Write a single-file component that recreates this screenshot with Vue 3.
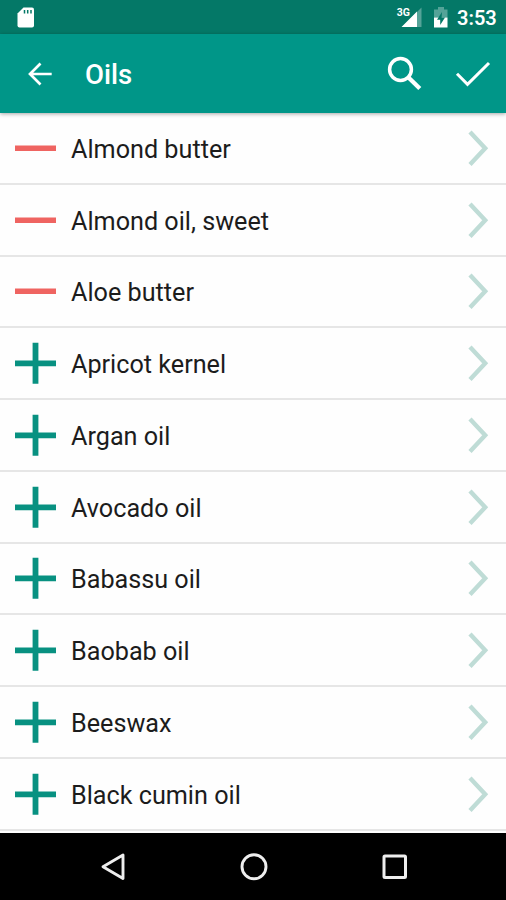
<script setup>
const oils = [
  { name: 'Almond butter', added: true },
  { name: 'Almond oil, sweet', added: true },
  { name: 'Aloe butter', added: true },
  { name: 'Apricot kernel', added: false },
  { name: 'Argan oil', added: false },
  { name: 'Avocado oil', added: false },
  { name: 'Babassu oil', added: false },
  { name: 'Baobab oil', added: false },
  { name: 'Beeswax', added: false },
  { name: 'Black cumin oil', added: false },
]
</script>

<template>
  <div class="screen">
    <div class="status">
      <svg class="sd" width="18" height="22" viewBox="0 0 18 22">
        <path d="M6.500 .5H15a2 2 0 0 1 2 2v16a2 2 0 0 1-2 2H2.500a2 2 0 0 1-2-2V6.500z" fill="#fff" />
        <path d="M7.500 3v3.500M10.700 3v3.500M14 3v3.500" stroke="#047867" stroke-width="1.500" />
      </svg>
      <div class="network">
        <span class="gen">3G</span>
        <svg width="21" height="20" viewBox="0 0 21 20">
          <path d="M20.500 .5V20H1z" fill="#fff" fill-opacity=".32" />
          <path d="M16 4.500V20H.5z" fill="#fff" />
        </svg>
      </div>
      <svg class="battery" width="16" height="21" viewBox="0 0 16 21">
        <path d="M5 0h6v2.500h3.500V10.500H1V2.500h4z" fill="#fff" fill-opacity=".32" />
        <path d="M1 10.500h13.500v10H1z" fill="#fff" />
        <path d="M9 5 4 12.800h3.200v5.200l4.800-7.500H8.600z" fill="#047867" />
      </svg>
      <span class="clock">3:53</span>
    </div>

    <header class="bar">
      <svg class="back" width="26" height="26" viewBox="0 0 26 26">
        <path d="M13.500 2.500 3 13l10.500 10.500M3 13h21.700" fill="none" stroke="#fff" stroke-width="2.700" />
      </svg>
      <h1 class="title">Oils</h1>
      <svg class="search" width="36" height="36" viewBox="0 0 36 36">
        <circle cx="13.500" cy="13.500" r="10.900" fill="none" stroke="#fff" stroke-width="3.500" />
        <path d="m21.500 21.500 11.300 11" stroke="#fff" stroke-width="4.300" />
      </svg>
      <svg class="check" width="36" height="28" viewBox="0 0 36 28">
        <path d="m2 13.800 10.500 10.500L34 3" fill="none" stroke="#fff" stroke-width="3" />
      </svg>
    </header>

    <ul class="list">
      <li v-for="oil in oils" :key="oil.name" class="row">
        <svg class="toggle" width="42" height="42" viewBox="0 0 42 42">
          <path v-if="oil.added" d="M0 21.300h41" stroke="#ef6461" stroke-width="5.600" />
          <path v-else d="M0 21.300h41M20.500 .8v41" stroke="#089181" stroke-width="5.800" />
        </svg>
        <span class="name">{{ oil.name }}</span>
        <svg class="chevron" width="22" height="38" viewBox="0 0 22 38">
          <path d="M2 3 17.200 19.300 2 35.600" fill="none" stroke="#bfdcd6" stroke-width="4.400" />
        </svg>
      </li>
    </ul>

    <nav class="nav">
      <svg width="28" height="30" viewBox="0 0 28 30">
        <path d="M24 3v23.500L4 14.750z" fill="none" stroke="#eee" stroke-width="2.900" stroke-linejoin="round" />
      </svg>
      <svg width="30" height="30" viewBox="0 0 30 30">
        <circle cx="15" cy="14.800" r="12" fill="none" stroke="#eee" stroke-width="2.900" />
      </svg>
      <svg width="28" height="28" viewBox="0 0 28 28">
        <rect x="3" y="3" width="21.500" height="21.500" rx="1" fill="none" stroke="#eee" stroke-width="3" />
      </svg>
    </nav>
  </div>
</template>

<style>
body {
  margin: 0;
}
</style>

<style scoped>
.screen {
  display: flex;
  flex-direction: column;
  width: 506px;
  height: 900px;
  overflow: hidden;
  background: #fefefe;
  font-family: Roboto, sans-serif;
}
svg {
  display: block;
  flex: none;
}
.status {
  display: flex;
  flex: none;
  box-sizing: border-box;
  height: 34px;
  padding: 7px 10px 0 17px;
  background: #047867;
  color: #fff;
}
.network {
  display: flex;
  margin-left: auto;
}
.gen {
  margin-right: -9px;
  font-size: 10.5px;
  line-height: 11px;
  font-weight: 700;
}
.battery {
  margin-left: 11px;
}
.clock {
  width: 39px;
  margin-left: 8px;
  font-size: 20px;
  line-height: 23px;
  font-weight: 600;
}
.bar {
  display: flex;
  flex: none;
  align-items: center;
  box-sizing: border-box;
  height: 79px;
  padding: 0 15px 0 27px;
  background: #009688;
  box-shadow: 0 1px 4px rgba(0, 0, 0, 0.35);
  color: #fff;
  z-index: 1;
}
.title {
  margin: 2px auto 0 32px;
  font-size: 27.5px;
  line-height: 32px;
  font-weight: 500;
}
.check {
  margin-left: 32px;
}
.list {
  flex: 1;
  margin: 0;
  padding: 0;
  list-style: none;
}
.row {
  display: flex;
  align-items: center;
  box-sizing: border-box;
  height: 71.75px;
  padding: 0 16px 0 15px;
  border-bottom: 2px solid #e6e6e6;
}
.name {
  flex: 1;
  margin: 4px 0 0 14px;
  color: #1c1c1c;
  font-size: 25.2px;
  line-height: 30px;
}
.nav {
  display: flex;
  flex: none;
  align-items: center;
  justify-content: center;
  gap: 112px;
  box-sizing: border-box;
  height: 67px;
  padding-left: 1px;
  background: #000;
}
</style>
